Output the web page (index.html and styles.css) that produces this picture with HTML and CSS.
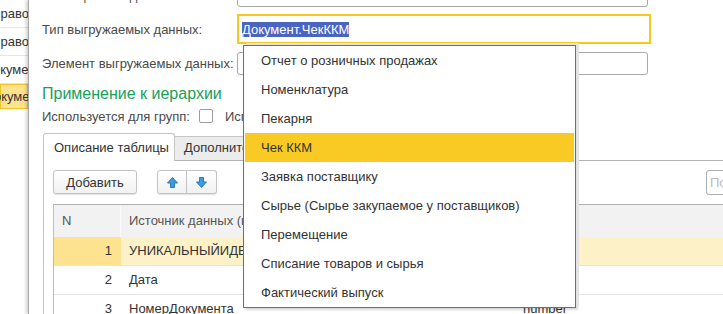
FILE: index.html
```html
<!DOCTYPE html>
<html lang="ru">

<head>
    <meta charset="UTF-8">
    <title>Тип выгружаемых данных</title>
    <link rel="stylesheet" href="styles.css">
</head>

<body>
    <div class="screen">
        <!-- List that lies behind the form window -->
        <div class="back-list">
            <div class="back-item">Справочник</div>
            <div class="back-item">Справочник</div>
            <div class="back-item">Документ</div>
            <div class="back-item current">Документ</div>
        </div>

        <div class="window">
            <div class="form">
                <div class="form-row first">
                    <div class="label">Таблица базы данных:</div>
                    <div class="field"></div>
                </div>
                <div class="form-row tall">
                    <div class="label">Тип выгружаемых данных:</div>
                    <div class="field active"><span class="selected">Документ.ЧекККМ</span></div>
                </div>
                <div class="form-row">
                    <div class="label">Элемент выгружаемых данных:</div>
                    <div class="field"></div>
                </div>
            </div>

            <div class="group-title">Применение к иерархии</div>
            <div class="check-row">
                <span>Используется для групп:</span>
                <span class="checkbox"></span>
                <span class="check-next">Используется для элементов:</span>
            </div>

            <div class="tabs">
                <div class="tab active">Описание таблицы</div>
                <div class="tab">Дополнительно</div>
            </div>

            <div class="tab-body">
                <div class="toolbar">
                    <button class="btn add">Добавить</button>
                    <div class="btn-group">
                        <button class="btn arrow">
                            <svg width="13" height="13" viewBox="0 0 13 13">
                                <path d="M6.5 1.5 L11.5 7 H8.5 V11.5 H4.5 V7 H1.5 Z" fill="#3d9be0" stroke="#2a78bf" stroke-width="1" stroke-linejoin="round"/>
                            </svg>
                        </button>
                        <button class="btn arrow">
                            <svg width="13" height="13" viewBox="0 0 13 13">
                                <path d="M6.5 11.5 L11.5 6 H8.5 V1.5 H4.5 V6 H1.5 Z" fill="#3d9be0" stroke="#2a78bf" stroke-width="1" stroke-linejoin="round"/>
                            </svg>
                        </button>
                    </div>
                    <div class="spacer"></div>
                    <div class="search">Поиск</div>
                </div>

                <div class="table">
                    <div class="row head">
                        <div class="cell n">N</div>
                        <div class="cell">Источник данных (поле)</div>
                        <div class="cell">Тип</div>
                    </div>
                    <div class="row current">
                        <div class="cell n">1</div>
                        <div class="cell">УНИКАЛЬНЫЙИДЕНТИФИКАТОР</div>
                        <div class="cell">string</div>
                    </div>
                    <div class="row">
                        <div class="cell n">2</div>
                        <div class="cell">Дата</div>
                        <div class="cell">date</div>
                    </div>
                    <div class="row">
                        <div class="cell n">3</div>
                        <div class="cell">НомерДокумента</div>
                        <div class="cell">number</div>
                    </div>
                </div>
            </div>
        </div>

        <!-- Open choice list of the "Тип выгружаемых данных" field -->
        <ul class="dropdown">
            <li>Отчет о розничных продажах</li>
            <li>Номенклатура</li>
            <li>Пекарня</li>
            <li class="hover">Чек ККМ</li>
            <li>Заявка поставщику</li>
            <li>Сырье (Сырье закупаемое у поставщиков)</li>
            <li>Перемещение</li>
            <li>Списание товаров и сырья</li>
            <li>Фактический выпуск</li>
        </ul>
    </div>
</body>

</html>
```

FILE: styles.css
```css
/* Form window in the 1C style */
* {
    box-sizing: border-box;
}

body {
    margin: 0;
    width: 723px;
    height: 314px;
    overflow: hidden;
    font-family: "Liberation Sans", Arial, sans-serif;
    font-size: 13px;
    color: #333;
    background: #fff;
}

.screen {
    position: relative;
    display: flex;
    height: 314px;
}

/* List behind the window */
.back-list {
    width: 28px;
    flex: none;
    overflow: hidden;
}

.back-item {
    height: 28px;
    line-height: 27px;
    border-bottom: 1px solid #e6e6e6;
    white-space: nowrap;
    text-indent: -16px;
}

.back-item.current {
    height: 25px;
    line-height: 23px;
    background: #fde38d;
    border: 1px solid #f3c42a;
}

/* Window */
.window {
    flex: none;
    width: 740px;
    border-left: 1px solid #a9a9a9;
    box-shadow: -2px 0 3px rgba(0, 0, 0, 0.18);
    padding-left: 13px;
    background: #fff;
    position: relative;
}

.form-row {
    display: flex;
    align-items: center;
    height: 23px;
}

.form-row.first {
    height: 24px;
    margin-top: -17px;
}

.form-row.tall {
    height: 30px;
    margin-top: 7px;
    margin-bottom: 8px;
}

.label {
    width: 195px;
    color: #4a4a4a;
    white-space: nowrap;
}

.field {
    width: 411px;
    height: 100%;
    border: 1px solid #a9a9a9;
    border-radius: 3px;
}

.field.active {
    width: 414px;
    border: 2px solid #f7c81f;
    border-radius: 0;
    padding-left: 3px;
    display: flex;
    align-items: center;
}

.selected {
    background: #4a64c2;
    color: #fff;
    line-height: 15px;
}

.group-title {
    margin-top: 9px;
    font-size: 16px;
    line-height: 20px;
    color: #17a05a;
}

.check-row {
    margin-top: 3px;
    height: 18px;
    display: flex;
    align-items: center;
    color: #4a4a4a;
    white-space: nowrap;
}

.checkbox {
    width: 14px;
    height: 14px;
    margin-left: 9px;
    border: 1px solid #9c9c9c;
    border-radius: 2px;
}

.check-next {
    margin-left: 12px;
}

/* Tabs */
.tabs {
    margin-top: 8px;
    margin-left: 1px;
    display: flex;
    align-items: flex-end;
    height: 28px;
    border-bottom: 1px solid #b3b3b3;
}

.tab {
    height: 24px;
    width: 110px;
    padding-left: 9px;
    line-height: 22px;
    background: #ececec;
    border: 1px solid #c6c6c6;
    border-bottom: none;
    border-left: none;
    color: #333;
    white-space: nowrap;
    overflow: hidden;
}

.tab.active {
    height: 28px;
    width: 132px;
    margin-bottom: -1px;
    padding-left: 10px;
    line-height: 27px;
    background: #fff;
    border-left: 1px solid #c6c6c6;
    border-radius: 3px 3px 0 0;
}

.tab-body {
    margin-left: 1px;
    height: 160px;
    border-left: 1px solid #c6c6c6;
    padding: 9px 0 0 9px;
}

/* Toolbar */
.toolbar {
    display: flex;
    align-items: center;
    height: 24px;
}

.btn {
    height: 24px;
    font-family: inherit;
    font-size: 13px;
    color: #333;
    background: linear-gradient(#ffffff, #f1f1f1);
    border: 1px solid #c3c3c3;
    border-radius: 3px;
    box-shadow: 0 1px 1px rgba(0, 0, 0, 0.12);
    padding: 0;
}

.btn.add {
    width: 84px;
}

.btn-group {
    display: flex;
    margin-left: 20px;
}

.btn.arrow {
    width: 30px;
    display: flex;
    align-items: center;
    justify-content: center;
}

.btn.arrow:first-child {
    border-radius: 3px 0 0 3px;
}

.btn.arrow + .btn.arrow {
    border-left: none;
    border-radius: 0 3px 3px 0;
}

.spacer {
    flex: 1;
}

.search {
    width: 62px;
    height: 25px;
    border: 1px solid #acacac;
    border-radius: 3px;
    padding-left: 3px;
    line-height: 23px;
    color: #b8b8c8;
}

/* Table */
.table {
    margin-top: 10px;
    border-left: 1px solid #bdbdbd;
    border-top: 1px solid #b0b0b0;
}

.row {
    display: grid;
    grid-template-columns: 67px 394px 1fr;
    height: 29px;
    border-bottom: 1px solid #e4e4e4;
    align-items: center;
}

.row .cell {
    padding-left: 8px;
    white-space: nowrap;
    overflow: hidden;
    line-height: 28px;
}

.row .cell.n {
    text-align: right;
    padding-right: 9px;
}

.row.head {
    height: 32px;
    background: #f2f2f2;
    border-bottom: none;
    color: #555;
}

.row.head .cell {
    line-height: 32px;
    border-right: 1px solid #fafafa;
}

.row.head .cell.n {
    text-align: left;
    padding-left: 8px;
}

.row.current {
    background: #fdf1c7;
}

.row.current .cell.n {
    background: #fde38f;
}

/* Choice list */
.dropdown {
    position: absolute;
    left: 243px;
    top: 45px;
    width: 333px;
    margin: 0;
    padding: 0 1px;
    list-style: none;
    background: #fff;
    border: 1px solid #6e6e6e;
    box-shadow: 3px -2px 0 #e3e3e3, 2px 2px 2px rgba(0, 0, 0, 0.15);
}

.dropdown li {
    height: 29px;
    line-height: 29px;
    padding-left: 16px;
    white-space: nowrap;
}

.dropdown li.hover {
    background: #f9ca24;
}
```
